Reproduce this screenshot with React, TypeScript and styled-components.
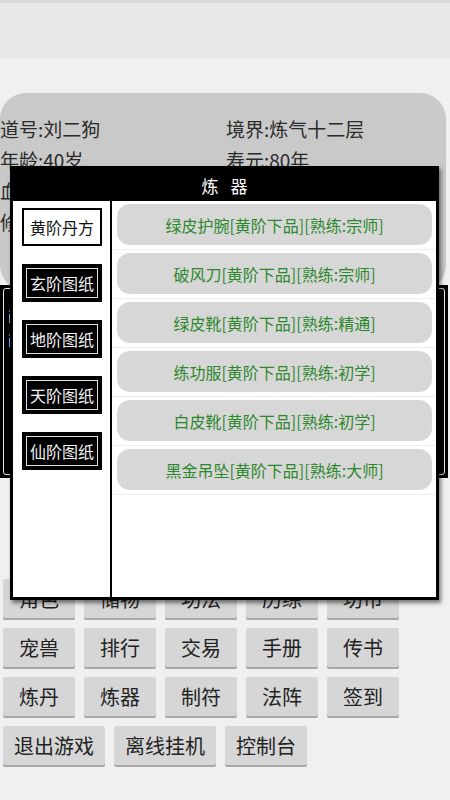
import styled, { createGlobalStyle } from 'styled-components';

const GlobalStyle = createGlobalStyle`
   html, body {
      margin: 0;
      padding: 0;
      background: #f0f0f0;
   }
   * {
      box-sizing: border-box;
   }
`;

const info = [
   ['道号:刘二狗', '境界:炼气十二层'],
   ['年龄:40岁', '寿元:80年'],
   ['血量:1200/1200', '灵力:860/860'],
   ['修为:35620/40000', '灵石:12800'],
];

const tabs = ['黄阶丹方', '玄阶图纸', '地阶图纸', '天阶图纸', '仙阶图纸'];

const recipes = [
   '绿皮护腕[黄阶下品][熟练:宗师]',
   '破风刀[黄阶下品][熟练:宗师]',
   '绿皮靴[黄阶下品][熟练:精通]',
   '练功服[黄阶下品][熟练:初学]',
   '白皮靴[黄阶下品][熟练:初学]',
   '黑金吊坠[黄阶下品][熟练:大师]',
];

const menu = [
   ['角色', '储物', '功法', '历练', '坊市'],
   ['宠兽', '排行', '交易', '手册', '传书'],
   ['炼丹', '炼器', '制符', '法阵', '签到'],
];

const bottom = ['退出游戏', '离线挂机', '控制台'];

const App = () => {
   return (
      <>
         <GlobalStyle />
         <Page>
            <TopBar />
            {/* 角色信息 */}
            <InfoPanel>
               {info.map((row, i) => (
                  <InfoRow key={i}>
                     <span>{row[0]}</span>
                     <span>{row[1]}</span>
                  </InfoRow>
               ))}
            </InfoPanel>
            {/* 消息框 */}
            <LogBox>
               <LogInner>
                  <LogLine>i 欢迎来到修仙世界</LogLine>
                  <LogLine>i 你获得了灵石x100</LogLine>
               </LogInner>
            </LogBox>
            {/* 菜单 */}
            <MenuGrid>
               {menu.map((row, i) => (
                  <MenuRow key={i}>
                     {row.map((label) => (
                        <MenuButton key={label}>{label}</MenuButton>
                     ))}
                  </MenuRow>
               ))}
               <MenuRow>
                  {bottom.map((label) => (
                     <MenuButton key={label} $wide>
                        {label}
                     </MenuButton>
                  ))}
               </MenuRow>
            </MenuGrid>

            {/* 炼器弹窗 */}
            <Dialog>
               <DialogHeader>炼 器</DialogHeader>
               <DialogBody>
                  <TabColumn>
                     {tabs.map((t, i) => (
                        <Tab key={t} $active={i === 0}>
                           {t}
                        </Tab>
                     ))}
                  </TabColumn>
                  <RecipeList>
                     {recipes.map((r) => (
                        <RecipeRow key={r}>
                           <RecipeItem>{r}</RecipeItem>
                        </RecipeRow>
                     ))}
                  </RecipeList>
               </DialogBody>
            </Dialog>
         </Page>
      </>
   );
};

const Page = styled.div`
   position: relative;
   width: 450px;
   height: 800px;
   overflow: hidden;
   background: #f0f0f0;
   font-family: 'Noto Sans CJK SC', 'Noto Sans', sans-serif;
`;

const TopBar = styled.div`
   height: 58px;
   background: #e7e7e7;
   border-top: 3px solid #dadada;
   margin-bottom: 35px;
`;

const InfoPanel = styled.div`
   margin: 0 4px 0 0;
   height: 198px;
   background: #c9c9c9;
   border-radius: 26px;
   padding-top: 20px;
`;

const InfoRow = styled.div`
   display: grid;
   grid-template-columns: 226px 1fr;
   height: 31px;
   font-size: 19px;
   line-height: 31px;
   color: #2a2a2a;
   white-space: nowrap;
`;

const LogBox = styled.div`
   margin-top: -6px;
   margin-right: 2px;
   height: 193px;
   background: #000;
   padding: 3px;
`;

const LogInner = styled.div`
   height: 100%;
   border: 1px solid #e8e8e8;
   border-radius: 3px;
   padding: 16px 4px;
`;

const LogLine = styled.div`
   color: #eee;
   font-size: 15px;
   line-height: 24px;
   white-space: nowrap;
`;

const MenuGrid = styled.div`
   margin-top: 101px;
   padding-left: 3px;
   display: flex;
   flex-direction: column;
   gap: 10px;
`;

const MenuRow = styled.div`
   display: flex;
   gap: 9px;
`;

interface MenuButtonProps {
   $wide?: boolean;
}

const MenuButton = styled.div<MenuButtonProps>`
   height: 39px;
   min-width: 72px;
   padding: 0 ${(props) => (props.$wide ? '11px' : '10px')};
   background: #d6d6d6;
   box-shadow: 0 2px 0 #a8a8a8;
   border-radius: 2px;
   display: flex;
   align-items: center;
   justify-content: center;
   font-size: 20px;
   color: #222;
   white-space: nowrap;
`;

const Dialog = styled.div`
   position: absolute;
   top: 166px;
   left: 10px;
   width: 429px;
   height: 434px;
   border: 3px solid #000;
   background: #fff;
   display: flex;
   flex-direction: column;
   box-shadow: 2px 3px 4px rgba(0, 0, 0, 0.5);
`;

const DialogHeader = styled.div`
   height: 32px;
   background: #000;
   color: #fff;
   font-size: 17px;
   letter-spacing: 4px;
   padding-left: 4px;
   display: flex;
   align-items: center;
   justify-content: center;
   white-space: pre;
`;

const DialogBody = styled.div`
   flex: 1;
   display: flex;
`;

const TabColumn = styled.div`
   width: 99px;
   border-right: 2px solid #000;
   padding: 7px 0 0 9px;
   display: flex;
   flex-direction: column;
   gap: 18px;
`;

interface TabProps {
   $active: boolean;
}

const Tab = styled.div<TabProps>`
   width: 80px;
   height: 38px;
   border: 2px solid #000;
   background: ${(props) => (props.$active ? '#fff' : '#000')};
   color: ${(props) => (props.$active ? '#111' : '#f2f2f2')};
   box-shadow: ${(props) => (props.$active ? 'none' : 'inset 0 0 0 2px #000, inset 0 0 0 3px #e0e0e0')};
   display: flex;
   align-items: center;
   justify-content: center;
   font-size: 16px;
`;

const RecipeList = styled.div`
   flex: 1;
   display: flex;
   flex-direction: column;
`;

const RecipeRow = styled.div`
   padding: 3px 4px 4px 5px;
   border-bottom: 1px solid #eeeeee;
`;

const RecipeItem = styled.div`
   height: 41px;
   background: #d7d7d7;
   border-radius: 13px;
   display: flex;
   align-items: center;
   justify-content: center;
   font-size: 16px;
   color: #2c882c;
   white-space: nowrap;
`;

export default App;
